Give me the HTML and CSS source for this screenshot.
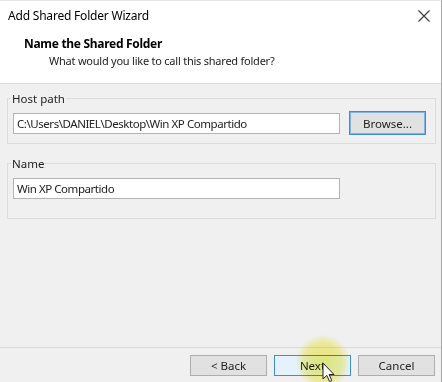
FILE: index.html
```html
<!DOCTYPE html>
<html lang="en">
<head>
    <meta charset="UTF-8">
    <meta name="viewport" content="width=device-width, initial-scale=1.0">
    <title>Add Shared Folder Wizard</title>
    <link rel="stylesheet" href="styles.css">
</head>
<body>
    <div class="window">
        <div class="titlebar">
            <span class="title">Add Shared Folder Wizard</span>
            <svg class="close" width="12" height="12" viewBox="0 0 12 12">
                <path d="M0.5 0.5 L11.5 11.5 M11.5 0.5 L0.5 11.5" stroke="#3a3a3a" stroke-width="1.1" fill="none"/>
            </svg>
        </div>

        <div class="header">
            <div class="header-title">Name the Shared Folder</div>
            <div class="header-sub">What would you like to call this shared folder?</div>
        </div>

        <div class="content">
            <fieldset class="group">
                <legend>Host path</legend>
                <div class="row">
                    <input class="field" type="text" value="C:\Users\DANIEL\Desktop\Win XP Compartido">
                    <button class="btn btn-default">Browse...</button>
                </div>
            </fieldset>

            <fieldset class="group group-name">
                <legend>Name</legend>
                <div class="row">
                    <input class="field" type="text" value="Win XP Compartido">
                </div>
            </fieldset>
        </div>

        <div class="footer">
            <button class="btn">&lt; Back</button>
            <button class="btn btn-hover">Next</button>
            <button class="btn">Cancel</button>
        </div>

        <!-- resalte del puntero del video -->
        <div class="pointer-glow"></div>
        <svg class="pointer" width="13" height="21" viewBox="0 0 13 21">
            <path d="M1 1 L1 17 L4.8 13.4 L7.6 19.6 L9.8 18.6 L7.1 12.5 L12 12.5 Z" fill="#fff" stroke="#222" stroke-width="1"/>
        </svg>
    </div>
</body>
</html>
```

FILE: styles.css
```css
body {
    margin: 0;
    font-family: "Noto Sans", "Open Sans", sans-serif;
    font-size: 11px;
    color: #000;
}
.window {
    position: relative;
    width: 441px;
    height: 381px;
    background: #f0f0f0;
    border-top: 1px solid #e4e4e4;
    border-right: 1px solid #a8a8a8;
    display: flex;
    flex-direction: column;
    overflow: hidden;
}
.titlebar {
    height: 29px;
    background: white;
    display: flex;
    align-items: center;
    justify-content: space-between;
    padding: 0 11px 0 8px;
}
.title {
    font-size: 12px;
    letter-spacing: -0.2px;
}
.close {
    display: block;
}
.header {
    background: white;
    height: 53px;
    padding: 0 0 0 24px;
    border-bottom: 1px solid #d9d9d9;
}
.header-title {
    font-size: 12px;
    font-weight: bold;
    line-height: 17px;
    letter-spacing: -0.3px;
    padding-top: 5px;
}
.header-sub {
    line-height: 17px;
    padding-left: 25px;
    letter-spacing: -0.23px;
    color: #222;
}
.content {
    flex: 1;
    padding: 7px 5px 0 7px;
}
.group {
    margin: 0;
    padding: 5px 9px 8px 5px;
    border: 1px solid #dcdcdc;
    border-radius: 0;
    min-width: 0;
}
.group legend {
    padding: 0 1px;
    margin-left: -2px;
    line-height: 15px;
    font-size: 11.5px;
    color: #222;
}
.group-name {
    margin-top: 12px;
    padding-bottom: 18px;
}
.row {
    display: flex;
    align-items: center;
    gap: 9px;
    height: 24px;
}
.field {
    box-sizing: border-box;
    width: 327px;
    height: 21px;
    margin: 0;
    padding: 0 3px;
    border: 1px solid #b4b4b4;
    background: white;
    font-family: inherit;
    font-size: 11.5px;
    letter-spacing: -0.45px;
    color: #222;
    outline: none;
}
.btn {
    box-sizing: border-box;
    width: 77px;
    height: 21px;
    margin: 0;
    padding: 0;
    border: 1px solid #adadad;
    background: #e1e1e1;
    font-family: inherit;
    font-size: 11.5px;
    color: #222;
}
.btn-default {
    height: 24px;
    border: 1px solid #3d8ed8;
    box-shadow: inset 0 0 0 1px #7fb4e4;
}
.btn-hover {
    background: #e5f1fb;
    border-color: #3d8ed8;
}
.footer {
    border-top: 1px solid #dadada;
    height: 35px;
    box-sizing: border-box;
    padding: 7px 6px 0 0;
    display: flex;
    justify-content: flex-end;
    gap: 7px;
}
.pointer-glow {
    position: absolute;
    left: 296px;
    top: 334px;
    width: 54px;
    height: 54px;
    border-radius: 50%;
    mix-blend-mode: multiply;
    background: radial-gradient(circle, rgba(246, 240, 90, 0.8) 0%, rgba(246, 240, 90, 0.55) 50%, rgba(246, 240, 90, 0) 72%);
}
.pointer {
    position: absolute;
    left: 322px;
    top: 361px;
}
```
